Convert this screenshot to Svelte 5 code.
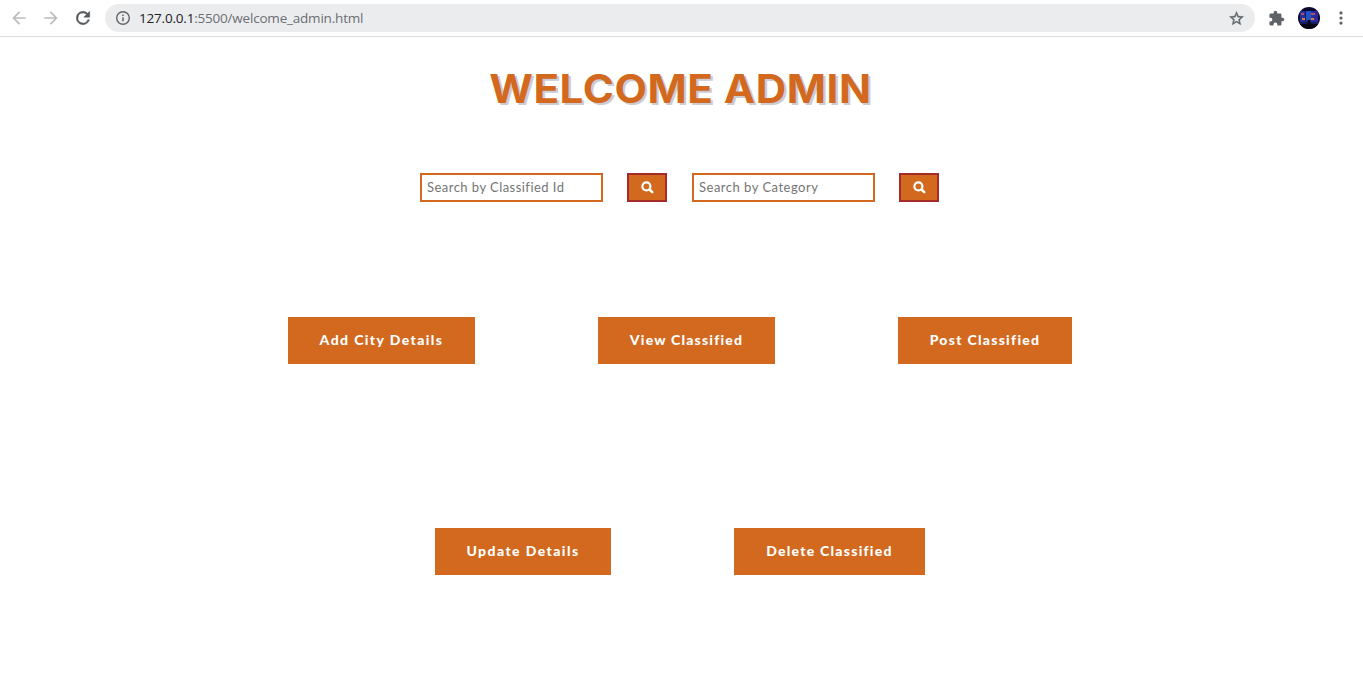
<script>
  const searches = [
    { label: 'Search by Classified Id', spacing: 0.46 },
    { label: 'Search by Category', spacing: 0.5 }
  ];
  const rows = [
    [
      { label: 'Add City Details', width: 187, spacing: 1.4 },
      { label: 'View Classified', width: 177, spacing: 1.2 },
      { label: 'Post Classified', width: 174, spacing: 1.28 }
    ],
    [
      { label: 'Update Details', width: 176, spacing: 1.42 },
      { label: 'Delete Classified', width: 191, spacing: 1.25 }
    ]
  ];
</script>

<div class="page">
  <header>
    <svg class="nav" viewBox="0 0 24 24"><path fill="#babcbe" d="M20 11H7.83l5.59-5.59L12 4l-8 8 8 8 1.41-1.41L7.83 13H20z"/></svg>
    <svg class="nav" viewBox="0 0 24 24"><path fill="#babcbe" d="M12 4l-1.41 1.41L16.17 11H4v2h12.17l-5.58 5.59L12 20l8-8z"/></svg>
    <svg class="nav reload" viewBox="0 0 24 24"><path fill="#54585d" stroke="#54585d" stroke-width=".6" d="M17.65 6.35A7.96 7.96 0 0 0 12 4a8 8 0 1 0 7.73 10h-2.08A6 6 0 1 1 12 6c1.66 0 3.14.69 4.22 1.78L13 11h7V4z"/></svg>
    <div class="address">
      <svg class="info" viewBox="0 0 16 16"><circle cx="8" cy="8" r="6.3" fill="none" stroke="#5f6368" stroke-width="1.4"/><path fill="#5f6368" d="M7.25 7.2h1.5v4.1h-1.5zM7.25 4.6h1.5v1.5h-1.5z"/></svg>
      <span class="url"><b>127.0.0.1</b>:5500/welcome_admin.html</span>
      <svg class="star" viewBox="0 0 24 24"><path fill="#5f6368" stroke="#5f6368" stroke-width=".5" d="M22 9.24l-7.19-.62L12 2 9.19 8.63 2 9.24l5.46 4.73L5.82 21 12 17.27 18.18 21l-1.63-7.03zM12 15.4l-3.76 2.27 1-4.28-3.32-2.88 4.38-.38L12 6.1l1.71 4.04 4.38.38-3.32 2.88 1 4.28z"/></svg>
    </div>
    <svg class="puzzle" viewBox="0 0 24 24"><path fill="#5f6368" d="M20.5 11H19V7a2 2 0 0 0-2-2h-4V3.5a2.5 2.5 0 0 0-5 0V5H4a2 2 0 0 0-2 2v3.8h1.5a2.7 2.7 0 0 1 0 5.4H2V20a2 2 0 0 0 2 2h3.8v-1.5a2.7 2.7 0 0 1 5.4 0V22H17a2 2 0 0 0 2-2v-4h1.5a2.5 2.5 0 0 0 0-5z"/></svg>
    <svg class="avatar" viewBox="0 0 22 22">
      <defs><clipPath id="round"><circle cx="11" cy="11" r="11"/></clipPath></defs>
      <g clip-path="url(#round)">
        <path fill="#0b0930" d="M0 0h22v22H0z"/>
        <path fill="#252f9c" d="M2 4h18v11H2z"/>
        <path fill="#2452c8" d="M8 4h5v9H8z"/>
        <path fill="#33249a" d="M17 4h3v11h-3z"/>
        <path fill="#a65370" d="M3 6h3v2H3zM13 6h4v2h-4z"/>
        <path fill="#d87a42" d="M4 11h3v2H4zM13 11h3v2h-3z"/>
        <path fill="#161a63" d="M2 15h18v2H2zM7 4h1v11H7z"/>
        <path fill="#060515" d="M10 13h2l1 4h9v5H0v-5h9z"/>
      </g>
    </svg>
    <svg class="dots" viewBox="0 0 4 16"><g fill="#5f6368"><circle cx="2" cy="2.9" r="1.6"/><circle cx="2" cy="8" r="1.6"/><circle cx="2" cy="13.1" r="1.6"/></g></svg>
  </header>

  <main>
    <h1>WELCOME ADMIN</h1>
    <form class="search" onsubmit={(e) => e.preventDefault()}>
      {#each searches as s}
        <input type="text" placeholder={s.label} style:letter-spacing="{s.spacing}px" />
        <button type="submit" class="find" aria-label={s.label}>
          <svg viewBox="0 0 13 13"><circle cx="5.4" cy="5.4" r="4" fill="none" stroke="#fff" stroke-width="2.2"/><path d="M8.5 8.5l2.7 2.7" stroke="#fff" stroke-width="2.6" stroke-linecap="round"/></svg>
        </button>
      {/each}
    </form>
    {#each rows as row}
      <div class="row">
        {#each row as a}
          <button class="action" style:width="{a.width}px" style:letter-spacing="{a.spacing}px">{a.label}</button>
        {/each}
      </div>
    {/each}
  </main>
</div>

<style>
  :global(body) { margin: 0; background: #fff; }
  .page { height: 684px; overflow: hidden; }
  header { box-sizing: border-box; height: 37px; border-bottom: 1px solid #dadce0; display: flex; align-items: center; padding: 0 0 0 10px; }
  .nav { width: 20px; height: 20px; margin: 0 12px 0 -1px; flex: none; }
  .nav + .nav { margin-left: 0; }
  .reload { margin-right: 12px; }
  .address { width: 1150px; height: 28px; border-radius: 14px; background: #ebecee; display: flex; align-items: center; flex: none; }
  .info { width: 16px; height: 16px; margin: 0 8px 0 10px; }
  .url { font: 13.5px/20px "Open Sans", sans-serif; letter-spacing: -.2px; color: #6b6e72; flex: 1; }
  .url b { font-weight: 400; color: #202124; }
  .star { width: 17px; height: 17px; margin-right: 10px; }
  .puzzle { width: 17px; height: 17px; margin-left: 13px; flex: none; }
  .avatar { width: 22px; height: 22px; margin-left: 13px; flex: none; }
  .dots { width: 4px; height: 16px; margin-left: 19px; flex: none; }
  main { padding-top: 27px; }
  h1 { margin: 0; padding-right: 2px; text-align: center; font: 700 39px/50px Inter, sans-serif; letter-spacing: .5px; transform: scaleX(1.08); color: #d2691e; text-shadow: 2px 2px 0 #ccccd2; white-space: nowrap; }
  .search { display: flex; margin: 59px 0 0 420px; }
  input { box-sizing: border-box; width: 183px; height: 29px; margin: 0; padding: 0 5px 1px; border: 2px solid #d2691e; border-radius: 0; font: 13px/20px Lato, sans-serif; outline: none; background: #fff; }
  input::placeholder { color: #757575; opacity: 1; }
  .find { box-sizing: border-box; width: 40px; height: 29px; margin: 0 25px 0 24px; padding: 0; border: 2px solid #a52a2a; background: #d2691e; display: grid; place-items: center; }
  .find svg { width: 13px; height: 13px; }
  .row { display: flex; justify-content: center; gap: 123px; margin-top: 115px; padding-right: 3px; }
  .row + .row { margin-top: 164px; }
  .action { height: 47px; padding: 0 0 1px; border: 0; background: #d2691e; color: #fff; font: 900 14px/20px Lato, sans-serif; white-space: nowrap; }
</style>
